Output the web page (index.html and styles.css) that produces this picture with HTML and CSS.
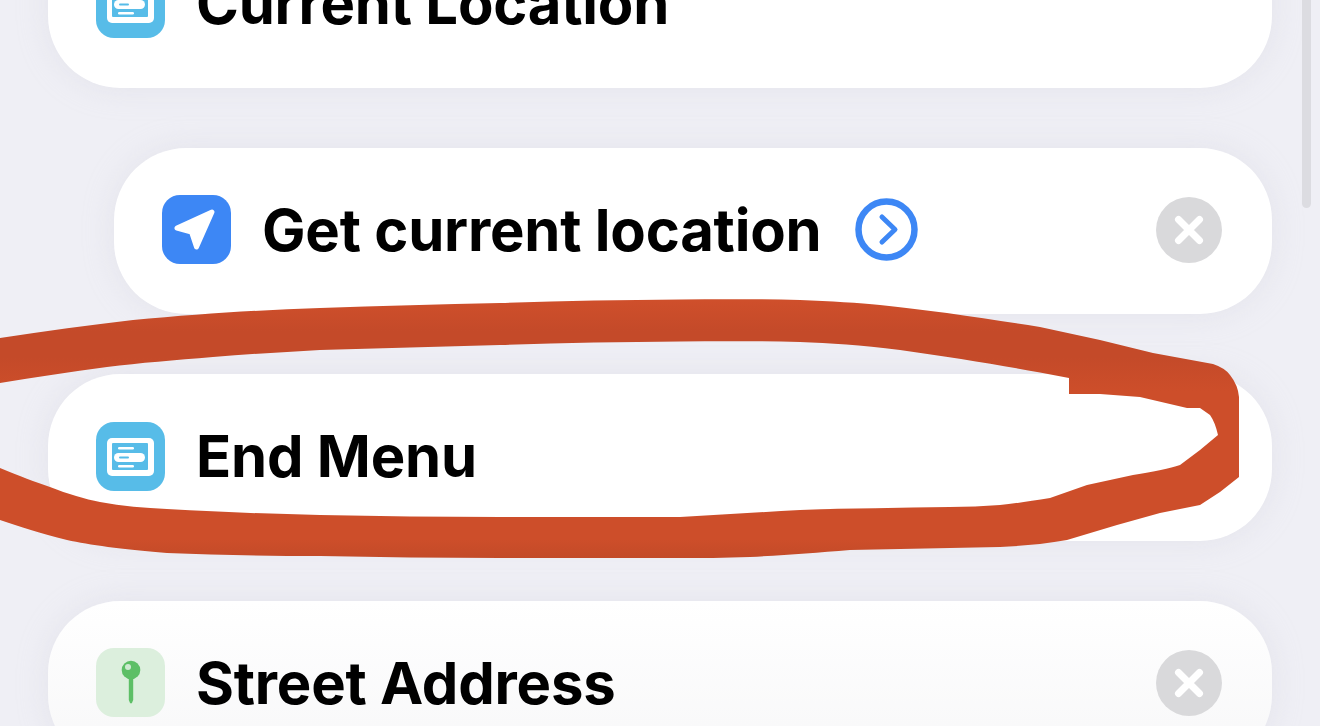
FILE: index.html
```html
<!DOCTYPE html>
<html lang="en">
<head>
    <meta charset="UTF-8">
    <meta name="viewport" content="width=device-width, initial-scale=1.0">
    <title>Shortcut Actions</title>
    <link rel="stylesheet" href="styles.css">
</head>
<body>
    <div class="list">
        <div class="card">
            <svg class="icon" viewBox="0 0 69 69">
                <rect width="69" height="69" rx="18" fill="#57bce8"/>
                <rect x="11" y="16" width="47" height="38" rx="5" fill="#fff"/>
                <rect x="16" y="21" width="36" height="27" rx="1" fill="#57bce8"/>
                <rect x="22" y="25" width="16" height="2.500" rx="1.200" fill="#fff"/>
                <rect x="18" y="31" width="31" height="9" rx="4.500" fill="#fff"/>
                <rect x="23" y="34.500" width="10" height="2" rx="1" fill="#57bce8"/>
                <rect x="22" y="43" width="16" height="2.500" rx="1.200" fill="#fff"/>
            </svg>
            <span class="title">Current Location</span>
        </div>

        <div class="card card-nested">
            <svg class="icon" viewBox="0 0 69 69">
                <rect width="69" height="69" rx="18" fill="#3d87f5"/>
                <path d="M15 33 L50 17 L34.500 52 L29.500 37 Z" fill="#fff" stroke="#fff" stroke-width="5" stroke-linejoin="round"/>
            </svg>
            <span class="title">Get current location</span>
            <svg class="more" viewBox="0 0 63 63">
                <circle cx="31.500" cy="31.500" r="28" fill="none" stroke="#3d87f5" stroke-width="6.500"/>
                <path d="M27 19 L40 31.500 L27 44" fill="none" stroke="#3d87f5" stroke-width="5" stroke-linecap="round" stroke-linejoin="round"/>
            </svg>
            <svg class="remove" viewBox="0 0 66 66">
                <circle cx="33" cy="33" r="33" fill="#d9d9db"/>
                <path d="M22.500 22.500 L43.500 43.500 M43.500 22.500 L22.500 43.500" stroke="#fff" stroke-width="7" stroke-linecap="round"/>
            </svg>
        </div>

        <div class="card">
            <svg class="icon" viewBox="0 0 69 69">
                <rect width="69" height="69" rx="18" fill="#57bce8"/>
                <rect x="11" y="16" width="47" height="38" rx="5" fill="#fff"/>
                <rect x="16" y="21" width="36" height="27" rx="1" fill="#57bce8"/>
                <rect x="22" y="25" width="16" height="2.500" rx="1.200" fill="#fff"/>
                <rect x="18" y="31" width="31" height="9" rx="4.500" fill="#fff"/>
                <rect x="23" y="34.500" width="10" height="2" rx="1" fill="#57bce8"/>
                <rect x="22" y="43" width="16" height="2.500" rx="1.200" fill="#fff"/>
            </svg>
            <span class="title">End Menu</span>
        </div>

        <div class="card card-faded">
            <svg class="icon" viewBox="0 0 69 69">
                <rect width="69" height="69" rx="18" fill="#dcefdd"/>
                <path d="M32.800 30 L32.800 52 Q35 59 37.200 52 L37.200 30 Z" fill="#5dbf66"/>
                <circle cx="35" cy="22" r="9.300" fill="#5dbf66"/>
                <circle cx="32" cy="19" r="3" fill="#cfead2"/>
            </svg>
            <span class="title">Street Address</span>
            <svg class="remove" viewBox="0 0 66 66">
                <circle cx="33" cy="33" r="33" fill="#d9d9db"/>
                <path d="M22.500 22.500 L43.500 43.500 M43.500 22.500 L22.500 43.500" stroke="#fff" stroke-width="7" stroke-linecap="round"/>
            </svg>
        </div>
    </div>

    <div class="scrollbar"></div>

    <!-- red marker drawn over the screenshot -->
    <svg class="marker" viewBox="0 0 1320 726">
        <defs>
            <linearGradient id="markerFill" gradientUnits="userSpaceOnUse" x1="0" y1="300" x2="0" y2="560">
                <stop offset="0" stop-color="#cf4f2b"/>
                <stop offset="0.12" stop-color="#c44a29"/>
                <stop offset="0.22" stop-color="#c44a29"/>
                <stop offset="0.35" stop-color="#cd4e2a"/>
                <stop offset="0.92" stop-color="#cd4e2a"/>
                <stop offset="1" stop-color="#c24a28"/>
            </linearGradient>
        </defs>
        <path fill="url(#markerFill)" d="M0 338 C45 331 90 325 133 320 C200 314 260 310 320 308 C380 306 440 304 500 303 C560 301 620 300 680 299.500 C720 299 760 299 800 300 C830 301 860 303 880 305 C905 308 925 310 947 313 C980 318 1010 322 1040 327 L1100 340 L1153 353 L1213 364 Q1225 368 1230 375 Q1238 385 1239 397 L1239 477 L1220 492 L1200 505 L1160 513 L1117 525 L1067 540 Q1055 542 1040 544 Q1020 546 1000 547 C950 548 900 549 850 550 C815 553 785 555 750 557 C725 558 700 558 680 558 L500 558 C440 558 380 557 320 556 C270 556 215 555 167 553 C120 549 90 545 67 540 C40 533 20 527 0 520 L0 468 C20 476 35 482 50 487 C68 494 85 499 100 502 C122 506 145 508 167 509 C220 512 270 514 320 515 C380 516 440 517 500 517 L680 517 C720 515 760 512 800 510 C850 508 900 508 950 507 Q975 507 1000 505 Q1020 503 1050 498 L1087 485 L1133 475 Q1165 470 1180 465 L1200 450 L1218 435 Q1215 422 1210 415 L1200 408 L1187 408 L1140 397 L1100 394 L1069 394 L1069 378 L1040 372.500 C1000 365 950 357 900 350 C860 345 830 343 800 342 C760 341 720 341 680 341.500 C620 342 560 343 500 345 C440 347 380 348 320 350 C285 352 250 354 213 357 C175 360 140 363 107 367 C70 372 35 377 0 383 Z"/>
    </svg>
</body>
</html>
```

FILE: styles.css
```css
html,
body {
    height: 100%;
}

body {
    font-family: Inter, "Liberation Sans", sans-serif;
    background-color: #efeff5;
    margin: 0;
    padding: 0;
    overflow: hidden;
    color: #000;
}

.list {
    display: flex;
    flex-direction: column;
    gap: 60px;
    margin-top: -79px;
    padding: 0 48px;
}

.card {
    display: flex;
    align-items: center;
    box-sizing: border-box;
    height: 166.5px;
    flex-shrink: 0;
    padding: 0 50px 2px 48px;
    background-color: #fff;
    border-radius: 72px;
    box-shadow: 0 0 30px rgba(205, 205, 218, 0.35);
}

.card-nested {
    margin-left: 66px;
}

.card-faded {
    background: linear-gradient(#fff, #f7f7f8);
}

.icon {
    width: 69px;
    height: 69px;
    flex-shrink: 0;
    margin-right: 31px;
}

.title {
    font-size: 58px;
    font-weight: 700;
    letter-spacing: -0.2px;
    white-space: nowrap;
}

.more {
    width: 63px;
    height: 63px;
    margin-left: 34px;
}

.remove {
    width: 66px;
    height: 66px;
    margin-left: auto;
}

.scrollbar {
    position: absolute;
    top: 0;
    left: 1302px;
    width: 9px;
    height: 208px;
    background-color: #dcdce1;
    border-radius: 0 0 5px 5px;
}

.marker {
    position: absolute;
    top: 0;
    left: 0;
    width: 1320px;
    height: 726px;
}
```
